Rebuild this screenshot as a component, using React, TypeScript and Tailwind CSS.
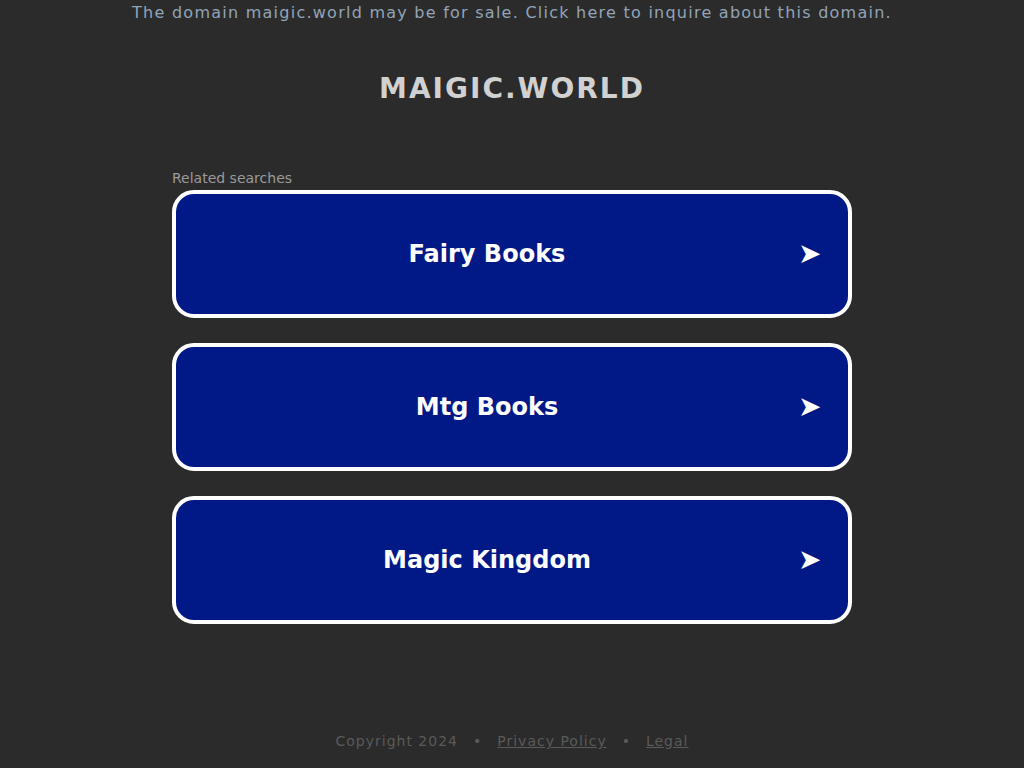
const searches = ['Fairy Books', 'Mtg Books', 'Magic Kingdom'];

export default function App() {
  return (
    <div className="min-h-[768px] bg-[#2b2b2b] flex flex-col items-center font-['DejaVu_Sans',sans-serif]">
      <p className="pt-[4px] text-[16px] leading-[18px] tracking-[1.25px] text-[#92a4b8]">
        The domain maigic.world may be for sale. Click here to inquire about this domain.
      </p>

      <h1 className="mt-[51px] text-[28px] leading-[32px] font-bold tracking-[2px] text-[#d1d1d1]">
        MAIGIC.WORLD
      </h1>

      <div className="mt-[65px] w-[680px]">
        <div className="text-[14px] leading-[16px] text-[#9a9a9a] mb-[4px]">Related searches</div>
        <ul className="flex flex-col gap-[25px]">
          {searches.map((s) => (
            <li
              key={s}
              className="h-[128px] border-[4px] border-white rounded-[22px] bg-[#011887] flex items-center"
            >
              <span className="flex-1 text-center text-[24px] font-bold text-white">{s}</span>
              <span className="w-[22px] mr-[28px] text-[28px] leading-none text-white">➤</span>
            </li>
          ))}
        </ul>
      </div>

      <footer className="mt-auto pb-[19px] text-[14px] leading-[16px] tracking-[1px] text-[#5a5a5a] flex gap-[15px]">
        <span>Copyright 2024</span>
        <span>•</span>
        <span className="underline">Privacy Policy</span>
        <span>•</span>
        <span className="underline">Legal</span>
      </footer>
    </div>
  );
}
